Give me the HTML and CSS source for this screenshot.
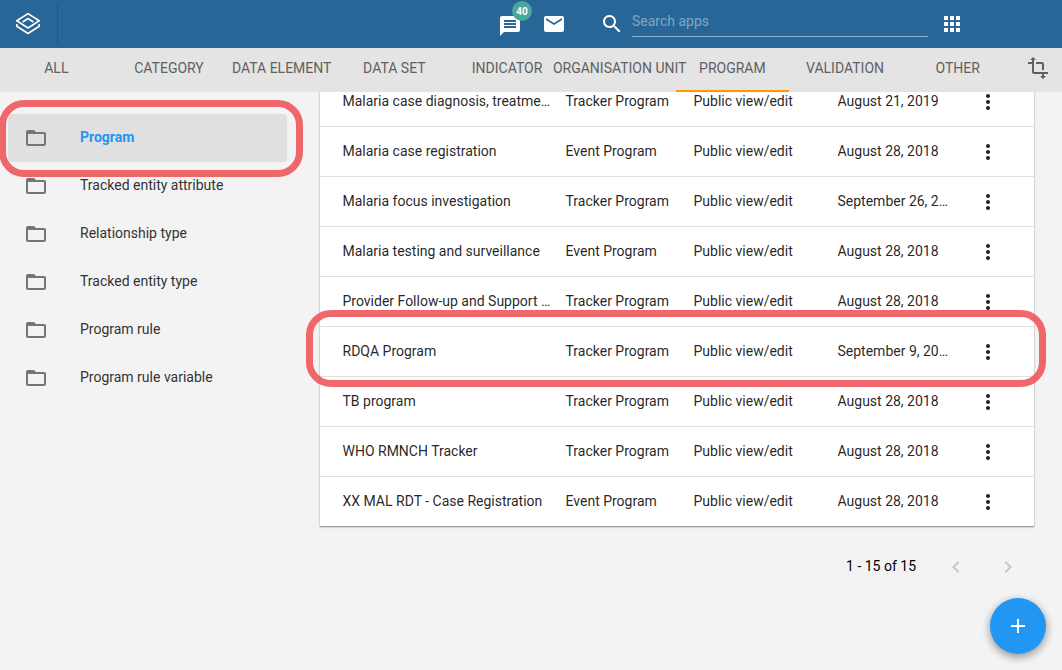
FILE: index.html
```html
<!DOCTYPE html>
<html lang="en">
<head>
<meta charset="utf-8">
<title>Maintenance</title>
<link rel="stylesheet" href="styles.css">
</head>
<body>
<svg width="0" height="0" class="defs">
  <symbol id="folder" viewBox="0 0 24 24"><path d="M20 6h-8l-2-2H4c-1.1 0-1.99.9-1.99 2L2 18c0 1.1.9 2 2 2h16c1.1 0 2-.9 2-2V8c0-1.1-.9-2-2-2zm0 12H4V8h16v10z"/></symbol>
  <symbol id="more" viewBox="0 0 24 24"><path d="M12 8c1.1 0 2-.9 2-2s-.9-2-2-2-2 .9-2 2 .9 2 2 2zm0 2c-1.1 0-2 .9-2 2s.9 2 2 2 2-.9 2-2-.9-2-2-2zm0 6c-1.1 0-2 .9-2 2s.9 2 2 2 2-.9 2-2-.9-2-2-2z"/></symbol>
</svg>
<header class="header">
  <div class="brand">
    <svg class="logo" viewBox="0 0 26 24"><path d="M13 1.600 24.200 8.700 13 16 1.800 8.700z"/><path d="M7.600 10 13 6.500l5.400 3.500"/><path d="M1.800 12v2.300L13 21.500l11.200-7.200V12"/></svg>
  </div>
  <div class="messages">
    <svg class="icon" viewBox="0 0 24 24"><path d="M20 2H4c-1.100 0-1.990.9-1.990 2L2 22l4-4h14c1.100 0 2-.9 2-2V4c0-1.100-.9-2-2-2zM6 9h12v2H6V9zm12 5H6v-2h12v2zm0-6H6V6h12v2z"/></svg>
    <span class="badge">40</span>
  </div>
  <svg class="icon mail" viewBox="0 0 24 24"><path d="M20 4H4c-1.100 0-1.990.9-1.990 2L2 18c0 1.100.9 2 2 2h16c1.100 0 2-.9 2-2V6c0-1.100-.9-2-2-2zm0 4l-8 5-8-5V6l8 5 8-5v2z"/></svg>
  <svg class="icon search-icon" viewBox="0 0 24 24"><path d="M15.500 14h-.79l-.28-.27C15.410 12.590 16 11.110 16 9.500 16 5.910 13.090 3 9.500 3S3 5.910 3 9.500 5.910 16 9.500 16c1.610 0 3.090-.59 4.230-1.570l.27.28v.79l5 4.990L20.490 19l-4.990-5zm-6 0C7.010 14 5 11.990 5 9.500S7.010 5 9.500 5 14 7.010 14 9.500 11.990 14 9.500 14z"/></svg>
  <div class="search">Search apps</div>
  <svg class="icon apps" viewBox="0 0 24 24"><path d="M4 8h4V4H4v4zm6 12h4v-4h-4v4zm-6 0h4v-4H4v4zm0-6h4v-4H4v4zm6 0h4v-4h-4v4zm6-10v4h4V4h-4zm-6 4h4V4h-4v4zm6 6h4v-4h-4v4zm0 6h4v-4h-4v4z"/></svg>
</header>
<nav class="tabs">
  <div class="tab">ALL</div>
  <div class="tab">CATEGORY</div>
  <div class="tab">DATA ELEMENT</div>
  <div class="tab">DATA SET</div>
  <div class="tab">INDICATOR</div>
  <div class="tab">ORGANISATION UNIT</div>
  <div class="tab active">PROGRAM</div>
  <div class="tab">VALIDATION</div>
  <div class="tab">OTHER</div>
  <div class="tab-tool"><svg class="icon" viewBox="0 0 24 24"><path d="M22 18v-2H8V4h2L7 1 4 4h2v2H2v2h4v8c0 1.100.9 2 2 2h8v2h-2l3 3 3-3h-2v-2h4zM10 8h6v6h2V8c0-1.100-.9-2-2-2h-6v2z"/></svg></div>
</nav>
<div class="page">
  <aside class="sidebar">
    <div class="item selected"><svg class="icon"><use href="#folder"/></svg><span>Program</span></div>
    <div class="item"><svg class="icon"><use href="#folder"/></svg><span>Tracked entity attribute</span></div>
    <div class="item"><svg class="icon"><use href="#folder"/></svg><span>Relationship type</span></div>
    <div class="item"><svg class="icon"><use href="#folder"/></svg><span>Tracked entity type</span></div>
    <div class="item"><svg class="icon"><use href="#folder"/></svg><span>Program rule</span></div>
    <div class="item"><svg class="icon"><use href="#folder"/></svg><span>Program rule variable</span></div>
  </aside>
  <main class="content">
    <div class="table">
      <div class="row"><span>Malaria case diagnosis, treatme…</span><span>Tracker Program</span><span>Public view/edit</span><span>August 21, 2019</span><svg class="icon"><use href="#more"/></svg></div>
      <div class="row"><span>Malaria case registration</span><span>Event Program</span><span>Public view/edit</span><span>August 28, 2018</span><svg class="icon"><use href="#more"/></svg></div>
      <div class="row"><span>Malaria focus investigation</span><span>Tracker Program</span><span>Public view/edit</span><span>September 26, 2…</span><svg class="icon"><use href="#more"/></svg></div>
      <div class="row"><span>Malaria testing and surveillance</span><span>Event Program</span><span>Public view/edit</span><span>August 28, 2018</span><svg class="icon"><use href="#more"/></svg></div>
      <div class="row"><span>Provider Follow-up and Support …</span><span>Tracker Program</span><span>Public view/edit</span><span>August 28, 2018</span><svg class="icon"><use href="#more"/></svg></div>
      <div class="row"><span>RDQA Program</span><span>Tracker Program</span><span>Public view/edit</span><span>September 9, 20…</span><svg class="icon"><use href="#more"/></svg></div>
      <div class="row"><span>TB program</span><span>Tracker Program</span><span>Public view/edit</span><span>August 28, 2018</span><svg class="icon"><use href="#more"/></svg></div>
      <div class="row"><span>WHO RMNCH Tracker</span><span>Tracker Program</span><span>Public view/edit</span><span>August 28, 2018</span><svg class="icon"><use href="#more"/></svg></div>
      <div class="row"><span>XX MAL RDT - Case Registration</span><span>Event Program</span><span>Public view/edit</span><span>August 28, 2018</span><svg class="icon"><use href="#more"/></svg></div>
    </div>
    <div class="pager">
      <span>1 - 15 of 15</span>
      <svg class="icon" viewBox="0 0 24 24"><path d="M15.410 7.410L14 6l-6 6 6 6 1.410-1.410L10.830 12z"/></svg>
      <svg class="icon" viewBox="0 0 24 24"><path d="M10 6L8.590 7.410 13.170 12l-4.580 4.590L10 18l6-6z"/></svg>
    </div>
  </main>
</div>
<div class="fab"><svg class="icon" viewBox="0 0 24 24"><path d="M19 13h-6v6h-2v-6H5v-2h6V5h2v6h6v2z"/></svg></div>
<div class="highlight highlight-menu"></div>
<div class="highlight highlight-row"></div>
</body>
</html>
```
FILE: styles.css
```css
* { box-sizing: border-box; }
body {
  margin: 0;
  width: 1062px;
  height: 670px;
  overflow: hidden;
  position: relative;
  background: #f3f3f3;
  font: 14px/20px Roboto, sans-serif;
  color: rgba(0, 0, 0, 0.87);
}
.defs { position: absolute; }
.icon { width: 24px; height: 24px; flex: none; display: block; fill: currentColor; }

.header {
  height: 48px;
  display: flex;
  align-items: center;
  background: #276696;
  color: #fff;
}
.brand {
  width: 58px;
  height: 42px;
  padding: 8px 0 0 15px;
  border-right: 1px solid #20567f;
  margin-right: 440px;
}
.logo { width: 26px; height: 24px; margin-top: 0.500px; display: block; fill: none; stroke: #fff; stroke-width: 1.7; stroke-linejoin: round; }
.messages { position: relative; padding-top: 4px; margin-right: 20px; }
.badge {
  position: absolute;
  left: 14px;
  top: -9px;
  width: 20px;
  height: 20px;
  border-radius: 50%;
  background: #4ba797;
  font-size: 10px;
  font-weight: 700;
  line-height: 21px;
  text-align: center;
}
.mail { margin-right: 34px; }
.search-icon { margin-right: 8px; }
.search {
  width: 296px;
  height: 26px;
  border-bottom: 1px solid #93b3cb;
  color: #7fa6c3;
  line-height: 20px;
  margin-right: 12px;
}

.tabs { height: 44px; display: flex; background: #e4e4e4; color: #606060; position: relative; z-index: 1; }
.tab {
  flex: 1 1 0;
  min-width: 0;
  height: 44px;
  display: flex;
  justify-content: center;
  line-height: 40px;
  white-space: nowrap;
}
.active { border-bottom: 2px solid #ff9800; }
.tab-tool { width: 48px; padding: 8px 0 0 12px; }

.page { display: flex; height: 578px; }
.sidebar { width: 320px; padding: 22px 33px 0 8px; color: #333; }
.item { height: 48px; display: flex; align-items: center; padding-left: 16px; border-radius: 4px; }
.item .icon { color: #757575; margin-right: 32px; }
.item span { padding-bottom: 2px; }
.selected { background: #e0e0e0; }
.selected span { color: #2196f3; font-weight: 700; }

.content { width: 714px; }
.table {
  margin-top: -15px;
  background: #fff;
  box-shadow: 0 1px 2px rgba(0, 0, 0, 0.3), 0 1px 1px rgba(0, 0, 0, 0.18);
}
.row {
  height: 50px;
  display: grid;
  grid-template-columns: 223px 128px 144px 138.500px 24px;
  align-items: center;
  padding-left: 22.500px;
  border-bottom: 1px solid #e0e0e0;
  white-space: nowrap;
}
.row:last-child { height: 49px; border-bottom: 0; }
.row .icon { position: relative; top: 0.5px; }
.row span { padding-bottom: 1px; }
.pager { display: flex; align-items: center; justify-content: flex-end; height: 24px; margin-top: 29px; padding-right: 14px; }
.pager span { padding-bottom: 2px; color: #000; }
.pager .icon { color: #c8c8c8; margin-left: 28px; }

.fab {
  position: absolute;
  left: 990px;
  top: 598px;
  width: 56px;
  height: 56px;
  border-radius: 50%;
  background: #2196f3;
  color: #fff;
  display: grid;
  place-items: center;
  box-shadow: 0 3px 10px rgba(0, 0, 0, 0.2), 0 3px 8px rgba(0, 0, 0, 0.24);
}
.highlight { position: absolute; z-index: 2; height: 77px; border: 7px solid rgba(239, 83, 88, 0.88); border-radius: 25px; }
.highlight-menu { left: -1px; top: 100px; width: 304px; }
.highlight-row { left: 306px; top: 310px; width: 740px; }
```
